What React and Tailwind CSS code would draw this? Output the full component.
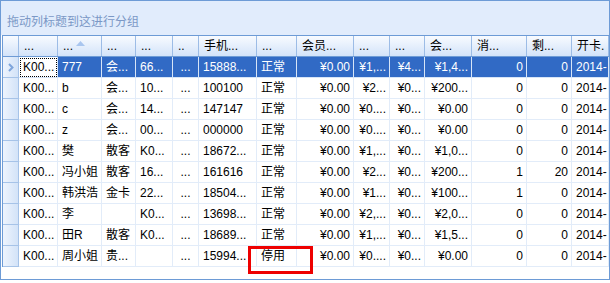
const COLS = [
  { w: 39, h: "...", a: "l" },
  { w: 44, h: "...", a: "l", sort: true },
  { w: 34, h: "...", a: "l" },
  { w: 37, h: "...", a: "l" },
  { w: 26, h: "..", a: "l", body: "c" },
  { w: 58, h: "手机...", a: "l" },
  { w: 40, h: "...", a: "l" },
  { w: 57, h: "会员...", a: "r" },
  { w: 36, h: "...", a: "r" },
  { w: 35, h: "...", a: "r" },
  { w: 47, h: "会...", a: "r" },
  { w: 55, h: "消...", a: "r" },
  { w: 45, h: "剩...", a: "r" },
  { w: 37, h: "开卡.", a: "l" },
];

const ROWS = [
  ["K00...", "777", "会...", "66...", "...", "15888...", "正常", "¥0.00", "¥1,...", "¥4...", "¥1,4...", "0", "0", "2014-"],
  ["K00...", "b", "会...", "10...", "...", "100100", "正常", "¥0.00", "¥2...", "¥0...", "¥200...", "0", "0", "2014-"],
  ["K00...", "c", "会...", "14...", "...", "147147", "正常", "¥0.00", "¥0....", "¥0...", "¥0.00", "0", "0", "2014-"],
  ["K00...", "z", "会...", "00...", "...", "000000", "正常", "¥0.00", "¥0....", "¥0...", "¥0.00", "0", "0", "2014-"],
  ["K00...", "樊", "散客", "K0...", "...", "18672...", "正常", "¥0.00", "¥1,...", "¥0...", "¥1,0...", "0", "0", "2014-"],
  ["K00...", "冯小姐", "散客", "16...", "...", "161616", "正常", "¥0.00", "¥2...", "¥0...", "¥200...", "1", "20", "2014-"],
  ["K00...", "韩洪浩", "金卡", "22...", "...", "18504...", "正常", "¥0.00", "¥1...", "¥0...", "¥100...", "1", "0", "2014-"],
  ["K00...", "李", "", "K0...", "...", "13698...", "正常", "¥0.00", "¥2,...", "¥0...", "¥2,0...", "0", "0", "2014-"],
  ["K00...", "田R", "散客", "K0...", "...", "18689...", "正常", "¥0.00", "¥1,...", "¥0...", "¥1,5...", "0", "0", "2014-"],
  ["K00...", "周小姐", "贵...", "", "...", "15994...", "停用", "¥0.00", "¥0....", "¥0...", "¥0.00", "0", "0", "2014-"],
];

const font = { fontFamily: '"Liberation Sans", "Noto Sans CJK SC", sans-serif' };

function HeaderRow() {
  return (
    <div className="flex h-[22px] bg-gradient-to-b from-[#f8fbff] to-[#d3e3f9] border-t border-b border-[#6d9bd6]">
      <div className="w-[16px] shrink-0 border-r border-[#9cbce6]" />
      {COLS.map((c, i) => (
        <div
          key={i}
          className="shrink-0 flex items-center pl-[5px] border-r border-[#9cbce6] overflow-hidden whitespace-nowrap text-black"
          style={{ width: c.w }}
        >
          <span>{c.h}</span>
          {c.sort && (
            <svg width="9" height="5" viewBox="0 0 9 5" className="ml-[3px] mb-[6px]">
              <path d="M0 5 L4.5 0 L9 5 Z" fill="#a9c6ef" />
            </svg>
          )}
        </div>
      ))}
    </div>
  );
}

function Row({ cells, selected }) {
  return (
    <div className={`flex h-[21px] ${selected ? "bg-[#316ac5] text-white" : "bg-white text-black"}`}>
      <div className="w-[16px] shrink-0 flex items-center justify-center bg-gradient-to-r from-[#eef4fd] to-[#d3e3f8] border-r border-b border-[#a6c3e8]">
        {selected && (
          <svg width="6" height="9" viewBox="0 0 6 9">
            <path d="M1 1 L4.5 4.5 L1 8" stroke="#7ea5dc" strokeWidth="2" fill="none" />
          </svg>
        )}
      </div>
      {cells.map((t, i) => {
        const c = COLS[i];
        const focus = selected && i === 0;
        const align =
          c.a === "r" ? "justify-end pr-[3px]" : c.body === "c" ? "justify-center" : "justify-start pl-[4px]";
        return (
          <div
            key={i}
            className={`shrink-0 flex items-center overflow-hidden whitespace-nowrap border-r border-b ${
              selected ? "border-[#d7e5f7]" : "border-[#e2ecf9]"
            } ${align} ${focus ? "bg-white text-black outline-1 outline-dotted outline-black -outline-offset-2" : ""}`}
            style={{ width: c.w }}
          >
            {t}
          </div>
        );
      })}
    </div>
  );
}

export default function App() {
  return (
    <div className="w-[610px] h-[283px] bg-white text-[12px] leading-none" style={font}>
      <div className="relative h-[280px] border border-[#6d9bd6] bg-white overflow-hidden">
        <div className="h-[34px] bg-[#e1ecfc] flex items-center pl-[6px] pt-[8px] text-[#7b98c6]">
          拖动列标题到这进行分组
        </div>
        <div className="ml-[1px] border-l border-[#6d9bd6]">
          <HeaderRow />
          {ROWS.map((r, i) => (
            <Row key={i} cells={r} selected={i === 0} />
          ))}
        </div>
        <div className="absolute left-[247px] top-[245px] w-[65px] h-[28px] border-[3px] border-[#ee0000]" />
      </div>
    </div>
  );
}
